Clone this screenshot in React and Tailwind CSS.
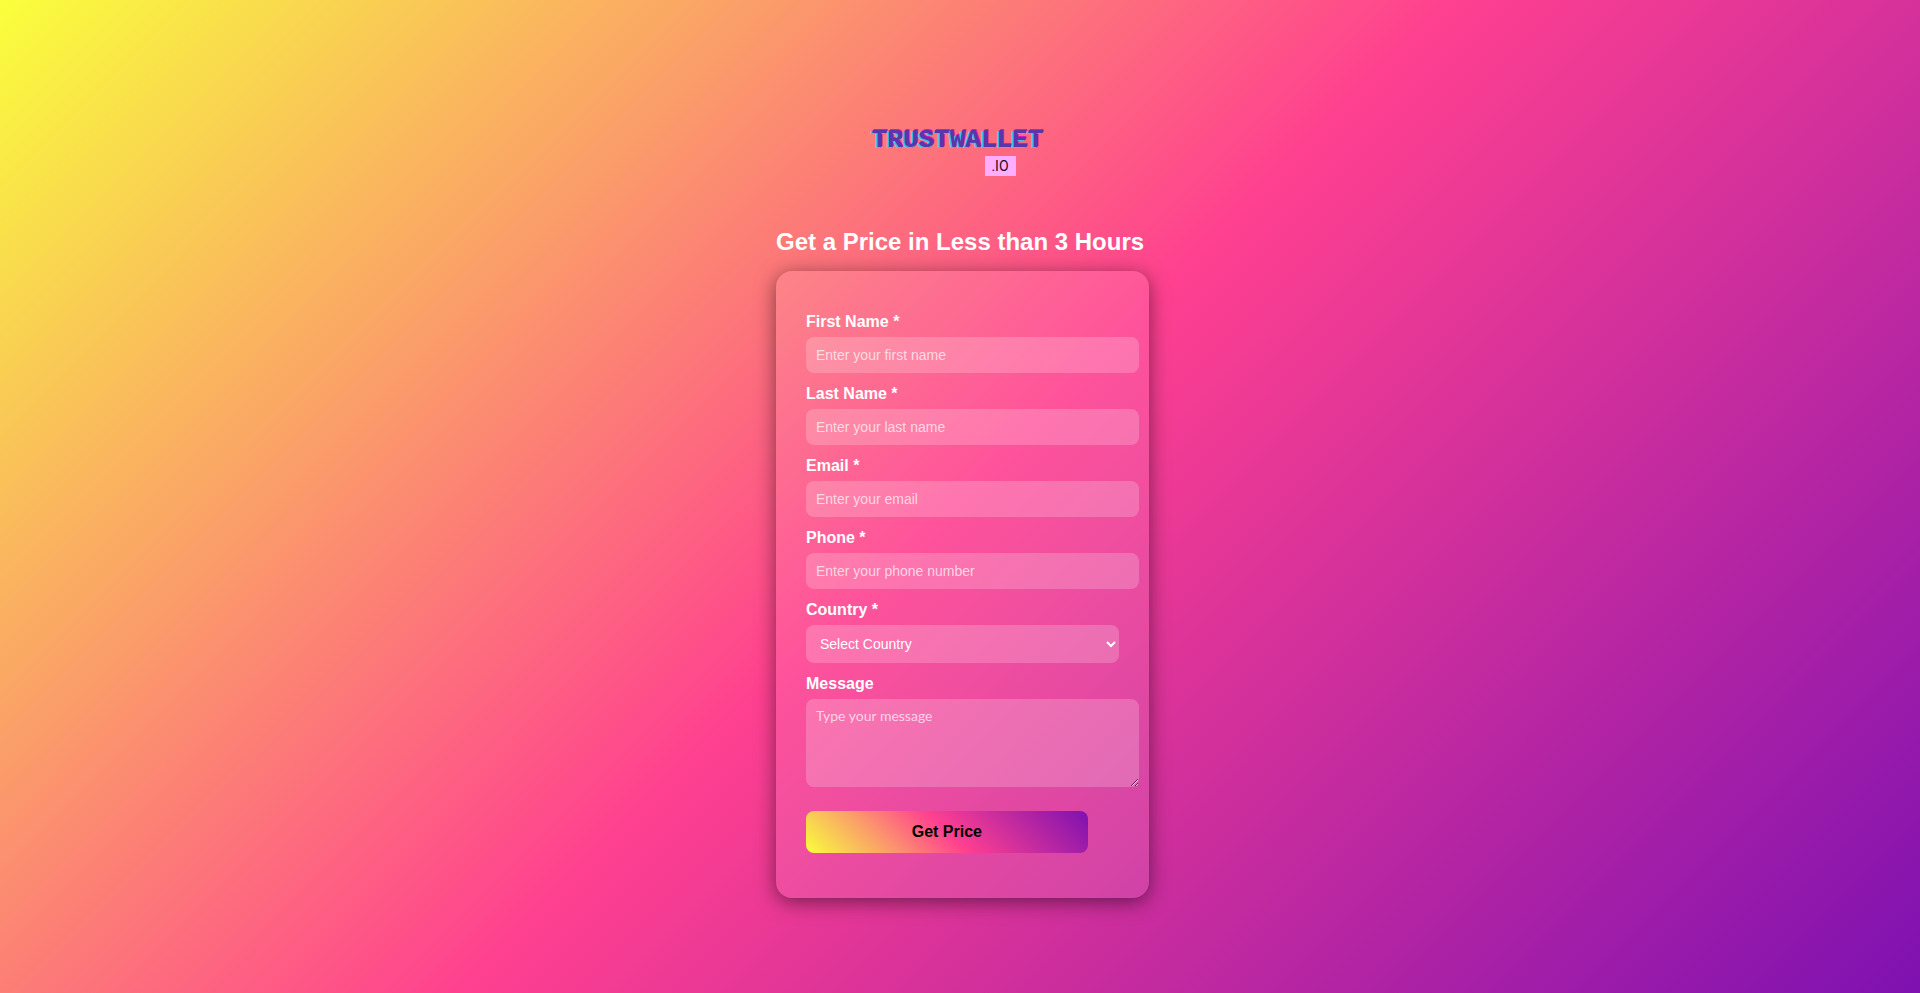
import React, { useState } from 'react';

const textFields = [
  { name: 'firstName', label: 'First Name *', type: 'text', placeholder: 'Enter your first name' },
  { name: 'lastName', label: 'Last Name *', type: 'text', placeholder: 'Enter your last name' },
  { name: 'email', label: 'Email *', type: 'email', placeholder: 'Enter your email' },
  { name: 'phone', label: 'Phone *', type: 'tel', placeholder: 'Enter your phone number' },
];

const countries = ['United States', 'United Kingdom', 'Canada', 'Germany', 'France', 'India', 'Australia'];

const Logo = () => (
  <div className="flex flex-col items-end w-[176px] mx-auto">
    <span className="w-full text-center text-[26px] leading-8 font-bold text-[#5a35ab] [text-shadow:-1px_1px_0_#3fc0e0,-2px_1px_0_#3fc0e0,1px_-1px_0_#d516c0] font-['Liberation_Mono',monospace]">
      TRUSTWALLET
    </span>
    <span className="w-[31px] mr-[30px] text-center bg-[#ffaeff] text-sm leading-5 text-[#1c0a28] font-['Roboto',sans-serif]">
      .IO
    </span>
  </div>
);

const App = () => {
  const [form, setForm] = useState({
    firstName: '',
    lastName: '',
    email: '',
    phone: '',
    country: '',
    message: '',
  });

  const handleChange = (e) => {
    setForm({ ...form, [e.target.name]: e.target.value });
  };

  const handleSubmit = (e) => {
    e.preventDefault();
  };

  return (
    <div className="min-h-screen flex flex-col items-center pt-[124px] pb-20 pl-[5px] bg-[linear-gradient(135deg,#faff3c,#f9d251_12%,#fb9e69_26%,#ff4090_50%,#7e11b1)] text-white font-['Liberation_Sans',sans-serif]">
      <main className="w-full max-w-[373px]">
        {/* Brand */}
        <header className="pr-[10px]">
          <Logo />
        </header>

        <h1 className="mt-[51px] mb-[14px] text-2xl leading-[30px] font-bold whitespace-nowrap">
          Get a Price in Less than 3 Hours
        </h1>

        {/* Quote form */}
        <form
          onSubmit={handleSubmit}
          className="flex flex-col gap-[11px] px-[30px] pt-[41px] pb-[45px] rounded-2xl bg-white/10 shadow-[0_4px_20px_rgba(0,0,0,0.5)]"
        >
          {textFields.map((field) => (
            <div key={field.name} className="flex flex-col gap-[5px]">
              <label htmlFor={field.name} className="text-base leading-5 font-bold">
                {field.label}
              </label>
              <input
                id={field.name}
                name={field.name}
                type={field.type}
                placeholder={field.placeholder}
                value={form[field.name]}
                onChange={handleChange}
                className="h-9 -mr-5 px-[10px] rounded-lg bg-white/20 text-sm text-white placeholder:text-white/70 outline-none"
              />
            </div>
          ))}

          <div className="flex flex-col gap-[5px]">
            <label htmlFor="country" className="text-base leading-5 font-bold">
              Country *
            </label>
            <select
              id="country"
              name="country"
              value={form.country}
              onChange={handleChange}
              className="h-[38px] px-[10px] rounded-lg bg-white/20 text-sm text-white outline-none"
            >
              <option value="">Select Country</option>
              {countries.map((country) => (
                <option key={country} value={country} className="text-black">
                  {country}
                </option>
              ))}
            </select>
          </div>

          <div className="flex flex-col gap-[5px]">
            <label htmlFor="message" className="text-base leading-5 font-bold">
              Message
            </label>
            <textarea
              id="message"
              name="message"
              placeholder="Type your message"
              value={form.message}
              onChange={handleChange}
              className="h-[88px] -mr-5 px-[10px] py-[7px] rounded-lg bg-white/20 text-sm text-white placeholder:text-white/70 outline-none font-['Lato',sans-serif]"
            />
          </div>

          <button
            type="submit"
            className="w-9/10 h-[42px] mt-[13px] rounded-lg bg-[linear-gradient(45deg,#faff3c,#f9d251_12%,#fb9e69_26%,#ff4090_50%,#7e11b1)] text-base font-bold text-black cursor-pointer"
          >
            Get Price
          </button>
        </form>
      </main>
    </div>
  );
};

export default App;
